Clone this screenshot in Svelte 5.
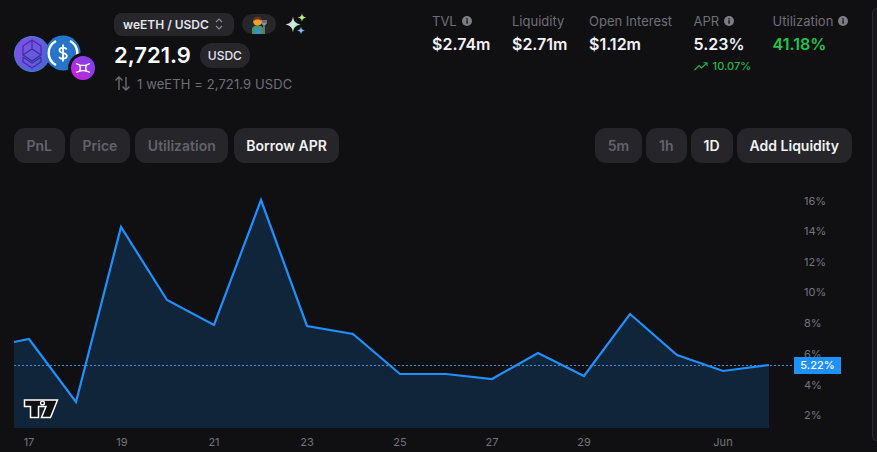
<script>
  const stats = [
    { label: "TVL", value: "$2.74m", info: true },
    { label: "Liquidity", value: "$2.71m" },
    { label: "Open Interest", value: "$1.12m" },
    { label: "APR", value: "5.23%", info: true, delta: "10.07%" },
    { label: "Utilization", value: "41.18%", info: true, good: true }
  ];
  const tabs = ["PnL", "Price", "Utilization", "Borrow APR"];
  const ranges = ["5m", "1h", "1D"];

  // chart is drawn in page coordinates, the viewBox starts at y=170
  const points = [
    [14, 342], [29, 339], [76, 402], [121, 227], [167, 300], [214, 325],
    [261, 200], [307, 326], [353, 334], [400, 374], [446, 374], [492, 379],
    [538, 353], [584, 376], [630, 314], [677, 355], [723, 371], [769, 365]
  ];
  const line = points.map((p) => p.join(",")).join(" ");
  const area = `14,428 ${line} 769,428`;

  const yTicks = [["16%", 201], ["14%", 231], ["12%", 262], ["10%", 292], ["8%", 323], ["6%", 354], ["4%", 385], ["2%", 415]];
  const xTicks = [["17", 29], ["19", 122], ["21", 214], ["23", 307], ["25", 400], ["27", 492], ["29", 584], ["Jun", 723]];
</script>

<div class="page">
  <main>
    <header>
      <div class="coins">
        <svg width="100" height="60" viewBox="0 0 100 60">
          <defs>
            <linearGradient id="eth" x1="0" y1="0" x2="1" y2="1">
              <stop offset="0" stop-color="#8a4fe6" />
              <stop offset="1" stop-color="#4a62d8" />
            </linearGradient>
            <linearGradient id="gmx" x1="0" y1="1" x2="1" y2="0">
              <stop offset="0" stop-color="#d51fd8" />
              <stop offset="1" stop-color="#6a48f5" />
            </linearGradient>
          </defs>
          <circle cx="32" cy="24" r="17.5" fill="url(#eth)" stroke="#2b8fd6" stroke-width="1" />
          <g fill="none" stroke="#3d2f9c" stroke-width="1.2">
            <path d="M32 10 L41 16 V25 L32 31 L23 25 V16 Z" />
            <path d="M23 25 L32 19 L41 25 M32 10 V19" />
            <path d="M23 27 L32 33 L41 27 M23 27 V32 L32 38 L41 32 V27" />
          </g>
          <circle cx="63" cy="23" r="17.5" fill="#2775ca" />
          <path d="M56 11 A13.5 13.5 0 0 0 56 35 M70 11 A13.5 13.5 0 0 1 70 35" fill="none" stroke="#fff" stroke-width="2.4" />
          <path d="M66.5 19.5 C66 17 59.5 16.8 59.5 20.3 C59.5 24.3 66.8 22 66.8 26 C66.8 29.4 59.8 29.4 59.2 26.8 M63 14.5 V31.5" fill="none" stroke="#fff" stroke-width="1.8" />
          <circle cx="83" cy="38" r="15" fill="#101013" />
          <circle cx="83" cy="38" r="12" fill="url(#gmx)" />
          <path d="M76 33.5 C80 36 86 36 90 33.5 M76 42.5 C80 40 86 40 90 42.5 M79 34.5 C81 37 81 39 79 41.5 M87 34.5 C85 37 85 39 87 41.5" fill="none" stroke="#fff" stroke-width="1.4" />
        </svg>
      </div>

      <div class="market">
        <div class="row-pair">
          <button class="pair">weETH / USDC
            <svg width="10" height="14" viewBox="0 0 10 14" fill="none" stroke="#8b8b93" stroke-width="1.2">
              <path d="M2 5 L5 2 L8 5 M2 9 L5 12 L8 9" />
            </svg>
          </button>
          <span class="farmer">
            <svg width="16" height="18" viewBox="0 0 16 18">
              <path d="M1 18 V13 C1 11 3 10 5 10 H9 C11 10 12 11 12 13 V18 Z" fill="#3f9a4a" />
              <path d="M3.5 18 V12.5 H9.5 V18 Z" fill="#3a8fd0" />
              <path d="M4 10 V13 M9 10 V13" stroke="#3a8fd0" stroke-width="1.2" />
              <circle cx="6.5" cy="5.5" r="4.3" fill="#f0a030" />
              <path d="M2.2 5.5 C2 1.8 4.4 0.8 6.5 0.8 C9 0.8 11 2 10.8 5.5 C9.5 3.8 8 3.6 6.5 3.6 C5 3.6 3.4 3.8 2.2 5.5 Z" fill="#6a3512" />
              <path d="M13 18 V8 M11 4 V8 H15 V4 M13 4 V8" fill="none" stroke="#b8b8bd" stroke-width="1" />
            </svg>
          </span>
          <svg class="sparkle" width="24" height="24" viewBox="0 0 24 24">
            <defs>
              <linearGradient id="spark" x1="0" y1="0" x2="1" y2="1">
                <stop offset="0" stop-color="#f0a8e0" />
                <stop offset="0.5" stop-color="#c8f0d8" />
                <stop offset="1" stop-color="#70d8a8" />
              </linearGradient>
            </defs>
            <path d="M9 4.5 C9.8 9.5 11.5 11.2 16.5 12.5 C11.5 13.8 9.8 15.5 9 20.5 C8.2 15.5 6.5 13.8 1.5 12.5 C6.5 11.2 8.2 9.5 9 4.5 Z" fill="url(#spark)" />
            <path d="M18 1 C18.4 4 19.2 4.9 22.5 5.5 C19.2 6.1 18.4 7 18 10 C17.6 7 16.8 6.1 13.5 5.5 C16.8 4.9 17.6 4 18 1 Z" fill="#b8f07a" />
            <path d="M17 14.5 C17.3 17 18.2 18 21 18.5 C18.2 19 17.3 20 17 22.5 C16.7 20 15.8 19 13 18.5 C15.8 18 16.7 17 17 14.5 Z" fill="#7fb6f0" />
          </svg>
        </div>
        <div class="row-price">
          <span class="price">2,721.9</span>
          <span class="quote">USDC</span>
        </div>
        <div class="row-rate">
          <svg width="17" height="17" viewBox="0 0 17 17" fill="none" stroke="#6b6b73" stroke-width="1.4">
            <path d="M5 15 V2 M1.5 5.5 L5 2 L8.5 5.5 M12 2 V15 M8.5 11.5 L12 15 L15.5 11.5" />
          </svg>
          <span>1 weETH = 2,721.9 USDC</span>
        </div>
      </div>

      <div class="stats">
        {#each stats as s}
          <div class="stat">
            <div class="label">{s.label}
              {#if s.info}
                <svg width="10" height="10" viewBox="0 0 10 10">
                  <circle cx="5" cy="5" r="5" fill="#7d7d85" />
                  <rect x="4.3" y="4.3" width="1.5" height="3.4" fill="#16161a" />
                  <rect x="4.3" y="2.2" width="1.5" height="1.4" fill="#16161a" />
                </svg>
              {/if}
            </div>
            <div class="value" class:good={s.good}>{s.value}</div>
            {#if s.delta}
              <div class="delta">
                <svg width="14" height="9" viewBox="0 0 14 9" fill="none" stroke="#1fb84a" stroke-width="1.1">
                  <path d="M0.5 8 L5 3.5 L7.5 6 L13 0.8 M9.5 0.8 H13 V4" />
                </svg>
                {s.delta}
              </div>
            {/if}
          </div>
        {/each}
      </div>
    </header>

    <nav class="toolbar">
      <div class="group">
        {#each tabs as t}
          <button class="chip" class:on={t === "Borrow APR"}>{t}</button>
        {/each}
      </div>
      <div class="group right">
        {#each ranges as r}
          <button class="chip" class:on={r === "1D"}>{r}</button>
        {/each}
        <button class="chip on">Add Liquidity</button>
      </div>
    </nav>

    <div class="chart">
      <svg class="plot" width="872" height="282" viewBox="0 170 872 282">
        <polygon points={area} fill="#10243a" />
        <line x1="14" x2="792" y1="365.5" y2="365.5" stroke="#2196f3" stroke-width="1" stroke-dasharray="2 2" />
        <polyline points={line} fill="none" stroke="#1e90ff" stroke-width="2.2" />
        <path d="M24.5 400 H57.5 L50.5 417.5 H41.5 L46 406.5 H38.5 V417.5 H30.5 V406.5 H24.5 Z" fill="#101013" stroke="#fff" stroke-width="1.5" />
        <circle cx="42.5" cy="403" r="2.6" fill="#fff" />
        <circle cx="42.5" cy="403" r="1.2" fill="#101013" />
        {#each yTicks as [t, y]}
          <text class="tick" x="804" y={y + 4}>{t}</text>
        {/each}
        {#each xTicks as [t, x]}
          <text class="tick" {x} y="446" text-anchor="middle">{t}</text>
        {/each}
      </svg>
      <div class="last">5.22%</div>
    </div>
  </main>
  <aside></aside>
</div>

<style>
  :global(body) {
    margin: 0;
    background: #101013;
    font-family: Inter, "Liberation Sans", sans-serif;
  }
  .page {
    display: flex;
    width: 877px;
    height: 452px;
    overflow: hidden;
  }
  main {
    width: 872px;
    flex: none;
    display: flex;
    flex-direction: column;
    box-sizing: border-box;
    padding-top: 12px;
  }
  aside {
    flex: 1;
    margin: 8px 0 11px;
    background: #15151a;
    border-left: 1px solid #2a2a30;
    border-top: 1px solid #2a2a30;
    border-bottom: 1px solid #2a2a30;
    border-radius: 12px 0 0 12px;
  }
  button {
    font-family: inherit;
    border: 0;
    cursor: pointer;
  }
  header {
    display: flex;
    height: 104px;
    flex: none;
  }
  .coins {
    width: 114px;
    padding-top: 18px;
    box-sizing: border-box;
    flex: none;
  }
  .coins svg {
    display: block;
  }
  .market {
    width: 318px;
    flex: none;
    display: flex;
    flex-direction: column;
  }
  .row-pair {
    display: flex;
    align-items: center;
    gap: 8px;
    height: 24px;
  }
  .pair {
    display: flex;
    align-items: center;
    gap: 5px;
    height: 23px;
    padding: 0 10px 0 9px;
    border-radius: 8px;
    background: #26262b;
    color: #e4e4e8;
    font-size: 12px;
    font-weight: 600;
  }
  .farmer {
    display: flex;
    align-items: flex-end;
    justify-content: center;
    width: 34px;
    height: 20px;
    border-radius: 10px;
    background: #26262b;
    overflow: hidden;
  }
  .row-price {
    display: flex;
    align-items: center;
    gap: 9px;
    margin-top: 6px;
    height: 26px;
  }
  .price {
    color: #fff;
    font-size: 22px;
    font-weight: 600;
  }
  .quote {
    height: 25px;
    line-height: 25px;
    padding: 0 8px;
    border-radius: 12px;
    background: #26262b;
    color: #e4e4e8;
    font-size: 12px;
    font-weight: 500;
  }
  .row-rate {
    display: flex;
    align-items: center;
    gap: 6px;
    margin-top: 7px;
    color: #6f6f78;
    font-size: 13px;
    letter-spacing: 0.1px;
  }
  .stats {
    display: flex;
    flex: none;
  }
  .stat {
    margin-right: 21.5px;
  }
  .label {
    display: flex;
    align-items: center;
    gap: 5px;
    margin-top: 1px;
    color: #6f6f78;
    font-size: 13px;
    line-height: 16px;
    white-space: nowrap;
  }
  .value {
    margin-top: 5px;
    color: #f2f2f5;
    font-size: 16px;
    font-weight: 600;
    line-height: 20px;
  }
  .value.good {
    color: #1fc44c;
  }
  .delta {
    display: flex;
    align-items: center;
    gap: 5px;
    margin-top: 5px;
    color: #1fb84a;
    font-size: 11px;
    font-weight: 500;
  }
  .toolbar {
    display: flex;
    justify-content: space-between;
    padding: 0 20px 0 14px;
    margin-top: 12px;
    flex: none;
  }
  .group {
    display: flex;
    gap: 5.5px;
  }
  .group.right {
    gap: 4px;
  }
  .chip {
    height: 35px;
    padding: 0 12.5px;
    border-radius: 11px;
    background: #25252a;
    color: #62626b;
    font-size: 14px;
    font-weight: 600;
  }
  .group.right .chip {
    padding: 0 13px;
  }
  .chip.on {
    color: #f2f2f5;
  }
  .chart {
    position: relative;
    margin-top: 7px;
    flex: none;
  }
  .plot {
    display: block;
  }
  .tick {
    fill: #74747c;
    font-size: 11px;
  }
  .last {
    position: absolute;
    left: 794px;
    top: 187px;
    width: 47px;
    height: 17px;
    background: #1e90ff;
    color: #fff;
    font-size: 11px;
    font-weight: 500;
    line-height: 17px;
    text-align: center;
  }
</style>
